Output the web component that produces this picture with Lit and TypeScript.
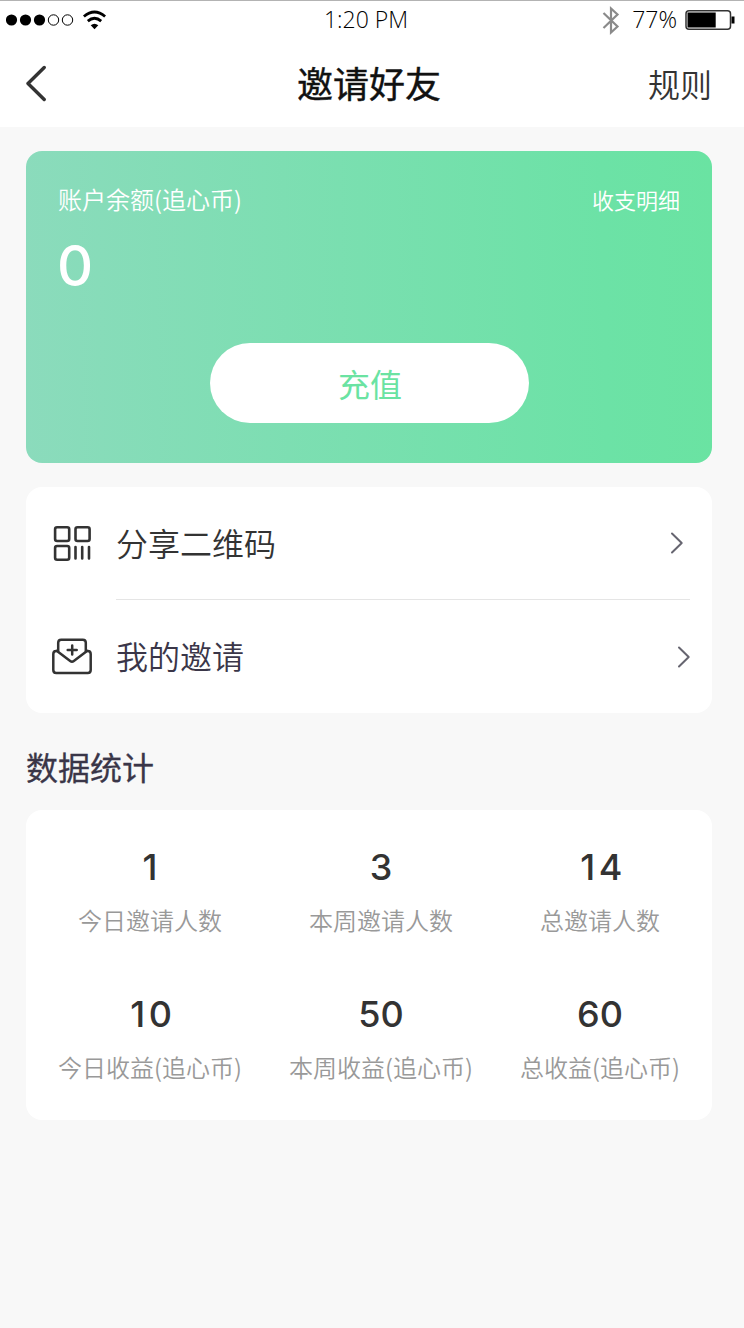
import { LitElement, html, css, svg } from "lit";
import { customElement } from "lit/decorators.js";
import { classMap } from "lit/directives/class-map.js";

const stats = [
  { value: "1", label: "今日邀请人数" },
  { value: "3", label: "本周邀请人数" },
  { value: "14", label: "总邀请人数" },
  { value: "10", label: "今日收益(追心币)" },
  { value: "50", label: "本周收益(追心币)" },
  { value: "60", label: "总收益(追心币)" },
];

@customElement("status-bar")
class StatusBar extends LitElement {
  static styles = css`
    :host {
      display: flex;
      align-items: center;
      justify-content: space-between;
      height: 40px;
      box-sizing: border-box;
      border-top: 1px solid #b3b3b3;
      padding: 0 9px 0 6px;
      font: 300 23px/36px "Open Sans", "Noto Sans", sans-serif;
      color: #000;
    }
    .side { display: flex; align-items: center; flex: 1 1 0; }
    .time { padding-right: 9px; padding-bottom: 3px; }
    .right { justify-content: flex-end; }
    .level { margin: 0 8px 0 12px; padding-bottom: 3px; }
    svg { display: block; }
  `;
  render() {
    return html`
      <div class="side">
        <svg width="104" height="38" viewBox="0 1.5 104 38">
          ${[0, 1, 2].map((i) => svg`<circle cx=${5.5 + i * 14} cy="19.5" r="5.6" fill="#000"/>`)}
          ${[3, 4].map((i) => svg`<circle cx=${5.5 + i * 14} cy="19.5" r="5.2" fill="none" stroke="#000" stroke-width="1"/>`)}
          <g fill="none" stroke="#000" stroke-width="2.8">
            <path d="M77.9 16 Q88.5 7 99.1 16"/>
            <path d="M81.8 20.6 Q88.5 14.8 95.2 20.6"/>
          </g>
          <path d="M84.7 24.7 Q88.5 21.6 92.3 24.7 L88.5 28.8Z" fill="#000"/>
        </svg>
      </div>
      <div class="time">1:20 PM</div>
      <div class="side right">
        <svg width="18" height="38" viewBox="602 1.5 18 38">
          <path d="M603.5 12.5 L617.5 26 L611 32 V8 L617.5 14 L603.5 27.5" fill="none" stroke="#8a8a8a" stroke-width="2.2"/>
        </svg>
        <span class="level">77%</span>
        <svg width="50" height="38" viewBox="685 1.5 50 38">
          <rect x="686" y="10.2" width="44.5" height="18.6" rx="3" fill="#fff" stroke="#333" stroke-width="1.5"/>
          <rect x="687.5" y="12" width="28.2" height="15" fill="#000"/>
          <rect x="731.5" y="16" width="3" height="7" fill="#000"/>
        </svg>
      </div>
    `;
  }
}

@customElement("app-root")
class AppRoot extends LitElement {
  static styles = css`
    :host {
      display: block;
      min-height: 1328px;
      background: #f8f8f8;
      color: #333;
      font-family: "Noto Sans CJK SC", sans-serif;
    }
    svg { display: block; flex: none; }
    .top { background: #fff; height: 127px; }
    .nav {
      display: grid;
      grid-template-columns: 1fr auto 1fr;
      align-items: center;
      height: 87px;
      padding: 0 32px 0 26px;
    }
    .title { font-size: 36px; font-weight: 400; -webkit-text-stroke: 0.4px; line-height: 54px; padding-bottom: 3px; color: #111; }
    .rules { font-size: 32px; font-weight: 350; line-height: 48px; padding-bottom: 2px; text-align: right; }
    main { padding: 24px 32px 0 26px; }
    .balance {
      box-sizing: border-box;
      height: 312px;
      border-radius: 16px;
      padding: 30px 32px 40px;
      display: flex;
      flex-direction: column;
      color: #fff;
      background: linear-gradient(89deg, #8bdbbc 0%, #6ce2a6 84%, #6ae3a2 100%);
    }
    .row { display: flex; justify-content: space-between; font-size: 24px; font-weight: 350; line-height: 36px; }
    .detail { font-size: 22px; }
    .amount { font: 500 56px/68px Inter, sans-serif; margin: 15px 0 0 -1px; }
    .recharge {
      margin: auto auto 0;
      width: 319px;
      height: 80px;
      padding: 0 0 0 2px;
      border: 0;
      border-radius: 40px;
      background: #fff;
      color: #6ae3a2;
      font: 400 32px/79px "Noto Sans CJK SC", sans-serif;
    }
    .panel { background: #fff; border-radius: 16px; }
    .menu { margin-top: 24px; height: 226px; }
    .item { display: flex; align-items: center; height: 112px; padding: 0 21px 0 26px; font-size: 32px; font-weight: 350; }
    .item span { flex: 1; margin-left: 24px; padding-bottom: 2px; }
    .first { padding-right: 28px; }
    .mine { color: #3a3648; height: 113px; }
    .mine span { padding-bottom: 4px; }
    .line { height: 1px; margin: 0 22px 0 90px; background: #e5e5e5; }
    h2 { margin: 29px 0 0; font-size: 32px; font-weight: 400; -webkit-text-stroke: 0.3px; line-height: 48px; color: #3a3648; }
    .stats {
      box-sizing: border-box;
      height: 310px;
      margin-top: 20px;
      padding: 35px 32px 0;
      display: grid;
      grid-template-columns: auto auto auto;
      justify-content: space-between;
      align-content: start;
      row-gap: 54px;
      text-align: center;
    }
    .value { font: 450 36px/44px Inter, sans-serif; }
    .spaced { letter-spacing: 3.5px; padding-left: 6px; }
    .label { font-size: 24px; font-weight: 350; line-height: 36px; margin-top: 13px; color: #999; }
  `;

  chevron() {
    return html`<svg width="14" height="22" viewBox="0 0 14 22">
      <path d="M2 1.5 L11.7 11 L2 20.5" fill="none" stroke="#666570" stroke-width="2" stroke-linecap="round" stroke-linejoin="round"/>
    </svg>`;
  }

  render() {
    return html`
      <header class="top">
        <status-bar></status-bar>
        <div class="nav">
          <svg width="22" height="38" viewBox="0 0 22 38">
            <path d="M18.2 2.5 L2 18.5 L18.2 34.5" fill="none" stroke="#333" stroke-width="3.4" stroke-linecap="round" stroke-linejoin="round"/>
          </svg>
          <div class="title">邀请好友</div>
          <div class="rules">规则</div>
        </div>
      </header>
      <main>
        <section class="balance">
          <div class="row"><span>账户余额(追心币)</span><span class="detail">收支明细</span></div>
          <div class="amount">0</div>
          <button class="recharge">充值</button>
        </section>
        <section class="panel menu">
          <div class="item first">
            <svg width="40" height="40" viewBox="52 523 40 40" fill="none" stroke="#333" stroke-width="2.6">
              <rect x="55.1" y="527.2" width="14.1" height="13.8" rx="2"/>
              <rect x="75.5" y="527.2" width="14.1" height="13.8" rx="2"/>
              <rect x="55.1" y="546" width="14.1" height="13.8" rx="2"/>
              <path d="M75.5 547V558.5M82.2 547V558.5M89 547V558.5" stroke-linecap="round"/>
            </svg>
            <span>分享二维码</span>
            ${this.chevron()}
          </div>
          <div class="line"></div>
          <div class="item mine">
            <svg width="40" height="40" viewBox="52 636.5 40 40" fill="none" stroke="#333" stroke-width="2.5" stroke-linecap="round" stroke-linejoin="round">
              <path d="M57 650.4H56.2Q53.3 650.4 53.3 653.4V669.4Q53.3 672.4 56.2 672.4H87.8Q90.7 672.4 90.7 669.4V653.4Q90.7 650.4 87.8 650.4H87"/>
              <path d="M57 650.4L70.2 660.6Q72 662 73.8 660.6L87 650.4"/>
              <path d="M58.2 650.5V642.2Q58.2 639.2 61.2 639.2H82.8Q85.8 639.2 85.8 642.2V650.5"/>
              <path d="M72.2 645V654M67.7 649.5H76.7"/>
            </svg>
            <span>我的邀请</span>
            ${this.chevron()}
          </div>
        </section>
        <h2>数据统计</h2>
        <section class="panel stats">
          ${stats.map(
            (s) => html`<div>
              <div class=${classMap({ value: true, spaced: /^1./.test(s.value) })}>${s.value}</div>
              <div class="label">${s.label}</div>
            </div>`,
          )}
        </section>
      </main>
    `;
  }
}
